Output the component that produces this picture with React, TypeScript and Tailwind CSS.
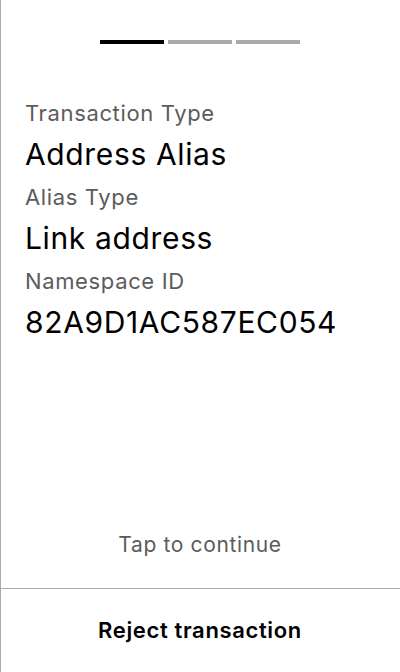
import React from "react";

const rows = [
  { label: "Transaction Type", value: "Address Alias" },
  { label: "Alias Type", value: "Link address" },
  { label: "Namespace ID", value: "82A9D1AC587EC054" },
];

export default function App() {
  return (
    <div
      className="flex h-[672px] w-[400px] flex-col bg-white text-black shadow-[inset_1px_0_0_#aaaaaa] tracking-[0.04em]"
      style={{ fontFamily: "Inter, 'Noto Sans', sans-serif" }}
    >
      <div className="flex justify-center gap-1 pt-10">
        <div className="h-1 w-16 bg-black" />
        <div className="h-1 w-16 bg-[#aaaaaa]" />
        <div className="h-1 w-16 bg-[#aaaaaa]" />
      </div>
      <div className="flex flex-col pl-[25px] pr-6 pt-[55px]">
        {rows.map((row, i) => (
          <div key={i} className="flex flex-col">
            <div className="mb-[7px] text-[22px] leading-[28px] text-[#5c5c5c]">{row.label}</div>
            <div className="mb-[9px] text-[30px] leading-[40px]">{row.value}</div>
          </div>
        ))}
      </div>
      <div className="flex-1" />
      <div className="pb-[29px] text-center text-[21px] leading-[28px] text-[#5c5c5c]">
        Tap to continue
      </div>
      <div className="flex h-[84px] items-center justify-center border-t border-[#aaaaaa] text-[22px] font-semibold">
        Reject transaction
      </div>
    </div>
  );
}
